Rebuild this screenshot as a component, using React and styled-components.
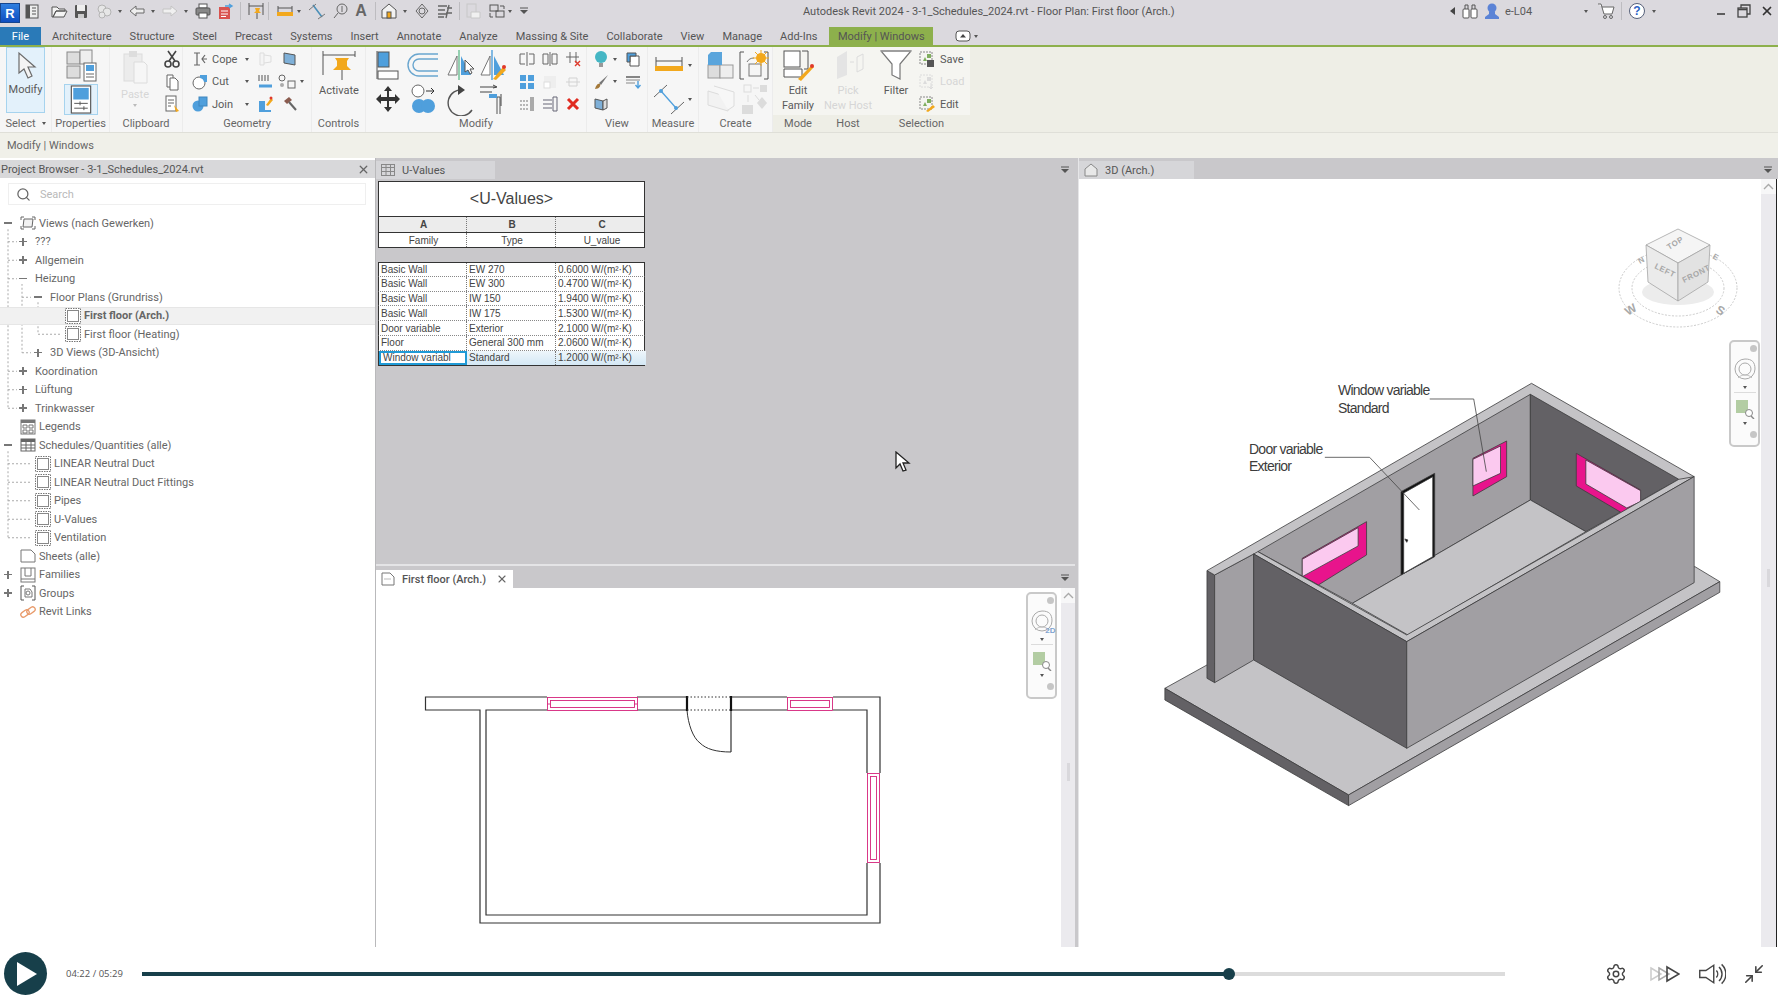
import React from 'react';
import styled, { createGlobalStyle } from 'styled-components';
import { Search, Settings, Minimize2, X } from 'lucide-react';

const GlobalStyle = createGlobalStyle`
  html, body {
    margin: 0;
    padding: 0;
    background: #fff;
    overflow: hidden;
  }
  * { box-sizing: border-box; }
`;

const UI_FONT = 'Roboto, "Liberation Sans", sans-serif';
const G = '#6b6b6b';
const L = '#b4b4b4';
const OFF = '#dcdcdc';
const B = '#4f9fdc';
const Y = '#f2a81d';
const R = '#e0392b';
const GR = '#7fae5e';

const ICONS = {
  doc: [18, 16, <><rect x="3" y="2" width="12" height="13" fill="#eee" stroke="#555" /><rect x="3" y="2" width="4" height="13" fill="#555" /><path d="M9 5h4M9 8h4M9 11h4" stroke="#555" /></>],
  open: [18, 16, <path d="M2 4h5l2 2h6v2H6l-3 6H2zM3 14l3-6h11l-3 6z" fill="#f4f4f4" stroke="#555" />],
  save: [18, 16, <><rect x="3" y="2" width="12" height="13" rx="1" fill="#555" /><rect x="5" y="2" width="8" height="6" fill="#eee" /><rect x="6" y="11" width="6" height="4" fill="#ccc" /></>],
  sync: [18, 16, <><circle cx="7" cy="6" r="4" stroke={L} fill="#e6e6e6" /><circle cx="12" cy="9" r="4" stroke={L} fill="#e6e6e6" /><circle cx="7" cy="12" r="3" stroke={L} fill="#e6e6e6" /></>],
  undo: [18, 16, <path d="M2 8l6-5v3h8v4H8v3z" fill="#eee" stroke={G} />],
  redo: [18, 16, <path d="M16 8l-6-5v3H2v4h8v3z" fill="#f0f0f0" stroke="#c4c4c4" />],
  print: [18, 16, <><rect x="5" y="1" width="8" height="4" fill="#fff" stroke="#555" /><rect x="2" y="5" width="14" height="7" rx="1" fill="#888" stroke="#555" /><rect x="5" y="10" width="8" height="5" fill="#fff" stroke="#555" /></>],
  sheetout: [18, 16, <><rect x="3" y="4" width="11" height="12" fill="#d9534f" /><path d="M5 8h7M5 11h7M5 13.5h5" stroke="#fff" /><path d="M9 3h7M13 1l3 2-3 2" stroke={B} strokeWidth="1.4" /></>],
  dimPin: [18, 18, <><path d="M2 1v12M16 1v12M2 4h14" stroke="#555" /><path d="M8 6h5l-1 3 2 2H7l2-2z" fill={Y} /><path d="M10 11v6" stroke="#555" /></>],
  ruler: [18, 14, <><path d="M2 2v6M16 2v6M2 4h14" stroke="#555" /><rect x="1" y="8" width="16" height="4" fill={Y} /></>],
  tagLine: [18, 18, <><path d="M5 3L14 15" stroke="#4a8fb8" strokeWidth="1.6" /><path d="M1 8l7-6M10 17l7-5" stroke="#777" /></>],
  tag: [18, 16, <><circle cx="11" cy="6" r="5" stroke="#666" /><path d="M3 15l4-5" stroke="#666" /><path d="M11 3v6" stroke="#666" /></>],
  home: [18, 16, <><path d="M9 1L2 7v8h14V7z" fill="#f2f2f2" stroke="#555" /><rect x="7" y="9" width="4" height="6" fill={Y} stroke="#555" /></>],
  target: [18, 16, <><path d="M9 1l6 7-6 7-6-7z" stroke="#666" /><circle cx="9" cy="8" r="3" stroke="#666" /></>],
  bars: [18, 16, <path d="M2 3h9M2 7h7M2 11h9M2 14h6M13 2l-3 13M11 5h5M10 10h6" stroke="#666" strokeWidth="1.4" />],
  excel: [18, 16, <><rect x="3" y="1" width="9" height="13" stroke="#c8c8c8" /><path d="M7 9h9v6H7z" fill="#f0f0f0" stroke="#c8c8c8" /></>],
  swap: [18, 16, <><rect x="2" y="2" width="8" height="6" stroke="#555" /><rect x="8" y="8" width="8" height="6" stroke="#555" /><path d="M12 3h4v3M2 10v4h3" stroke="#555" /></>],
  menuCaret: [10, 10, <><path d="M1 2h8" stroke="#555" /><path d="M1 4h8L5 8z" fill="#555" /></>],
  binoc: [18, 16, <><rect x="2" y="6" width="6" height="9" rx="1" fill="#fff" stroke="#555" /><rect x="10" y="6" width="6" height="9" rx="1" fill="#fff" stroke="#555" /><path d="M4 6V2h3v4M11 6V2h3v4" stroke="#555" /></>],
  user: [18, 18, <><circle cx="9" cy="6" r="4.5" fill="#5b83d6" /><path d="M6 10h6v2l4 3v2H2v-2l4-3z" fill="#5b83d6" /></>],
  cart: [18, 16, <><path d="M1 1h3l3 10h8l2-7H5" fill="#fff" stroke="#666" /><circle cx="8" cy="14" r="1.5" stroke="#666" /><circle cx="14" cy="14" r="1.5" stroke="#666" /></>],
  help: [18, 18, <><circle cx="9" cy="9" r="7.5" fill="#fff" stroke="#56617a" /><text x="9" y="13" textAnchor="middle" fontSize="12" fontWeight="700" fontFamily="Liberation Sans" fill="#2c63c5" stroke="none">?</text></>],
  restore: [14, 14, <><rect x="1" y="4" width="9" height="9" fill="#dbd9de" stroke="#444" strokeWidth="1.3" /><path d="M4 4V1h9v9h-3" stroke="#444" strokeWidth="1.3" /><path d="M1 5.5h9" stroke="#444" strokeWidth="1.6" /></>],
  ribbonToggle: [16, 12, <><rect x="1" y="1" width="14" height="10" rx="3" fill="#fff" stroke="#555" /><path d="M5 7.5h6L8 4z" fill="#444" /></>],

  modify: [28, 30, <path d="M7 2v20l5-4 4 9 4-2-4-9h7z" fill="#f4f4f4" stroke={G} strokeWidth="1.2" />],
  propStack: [32, 34, <><rect x="2" y="3" width="13" height="12" fill="#ddd" stroke="#888" /><rect x="15" y="1" width="12" height="14" fill="#eee" stroke="#888" /><rect x="2" y="17" width="13" height="12" fill="#ddd" stroke="#888" /><rect x="19" y="14" width="12" height="18" fill="#fff" stroke="#666" /><rect x="21" y="16" width="8" height="6" fill={B} /><path d="M21 25h8M21 28h8" stroke="#666" /></>],
  propPanel: [24, 30, <><rect x="2" y="1" width="20" height="28" fill="#fff" stroke="#555" strokeWidth="1.2" /><rect x="4" y="3" width="16" height="12" fill={B} /><path d="M5 19h14M5 24h14M11 17v4M15 22v4" stroke="#555" /></>],
  paste: [28, 36, <><rect x="3" y="5" width="18" height="27" fill="#ececec" stroke={OFF} /><rect x="8" y="2" width="8" height="6" fill="#ddd" /><path d="M13 13h10l3 3v18H13z" fill="#f6f6f6" stroke={OFF} /></>],
  scissors: [16, 18, <><circle cx="4" cy="14" r="3" stroke="#444" strokeWidth="1.6" /><circle cx="12" cy="14" r="3" stroke="#444" strokeWidth="1.6" /><path d="M5 11L12 1M11 11L4 1" stroke="#444" strokeWidth="1.6" /></>],
  copy: [16, 18, <><path d="M3 2h6v12H3z" fill="#fff" stroke="#666" /><path d="M6 5h5l3 3v9H6z" fill="#fff" stroke="#666" /></>],
  matchProps: [16, 18, <><rect x="2" y="1" width="10" height="15" fill="#fff" stroke="#666" /><path d="M4 5h6M4 8h6M4 11h3" stroke="#666" /><path d="M10 10l5 6-3 1z" fill={Y} /></>],
  cope: [16, 16, <path d="M2 2h6M2 14h6M5 2v12M10 8h5M13 4l-3 4 3 4" stroke="#666" strokeWidth="1.2" />],
  cut: [16, 16, <><circle cx="7" cy="9" r="6" fill="#fff" stroke="#666" /><path d="M8 1h7v7h-3a5 5 0 0 0-4-4z" fill={B} /></>],
  join: [16, 16, <><circle cx="6" cy="10" r="5.5" fill={B} /><rect x="7" y="1" width="8" height="9" fill={B} stroke="#3f86bd" /></>],
  geoA: [14, 16, <><path d="M2 2h4v12H2z" stroke="#ddd" fill="#f4f4f4" /><path d="M6 4l7 1v6l-7 1" stroke="#ddd" /></>],
  geoB: [14, 16, <path d="M1 2l11 2v10l-11-2z" fill="#7fb0d8" stroke="#555" />],
  geoC: [16, 16, <><path d="M2 1v6M5 1v6M8 1v6M11 1v6" stroke="#555" /><path d="M2 12h13" stroke={B} strokeWidth="3" /></>],
  geoD: [20, 16, <><circle cx="5" cy="4" r="3" stroke="#666" /><circle cx="5" cy="11" r="2" fill="#aaa" /><rect x="11" y="7" width="7" height="7" stroke="#666" /></>],
  geoE: [16, 16, <><path d="M2 5h6v9h6v2H2z" fill={B} /><path d="M9 9l5-7 2 2-5 6z" fill={Y} /><circle cx="14" cy="2" r="1.5" fill={R} /></>],
  hammer: [16, 16, <><path d="M2 5l5-4 3 3-5 4z" fill="#8a5b4e" /><path d="M7 6l7 8" stroke="#666" strokeWidth="2" /></>],
  activate: [36, 32, <><path d="M2 2v24M34 2v6M2 6h32" stroke="#555" /><path d="M14 9h14l-2 3v5l4 4H12l4-4v-5z" fill={Y} /><path d="M21 21v10" stroke="#555" /></>],
  align: [26, 30, <><path d="M2 1v28" stroke="#555" /><rect x="3" y="2" width="11" height="15" fill={B} stroke="#555" /><rect x="3" y="21" width="20" height="8" fill="#fff" stroke="#555" /></>],
  offset: [32, 26, <path d="M31 2H12A11 11 0 0 0 12 24H31M31 7H12a6 6 0 0 0 0 12h19" stroke="#6aa6cf" strokeWidth="1.4" />],
  mirrorA: [26, 32, <><path d="M11 7L2 26h9z" fill="#fff" stroke="#777" /><path d="M13 1v30" stroke="#6bbf93" strokeWidth="1.4" /><path d="M15 7l10 19H15z" fill={B} /></>],
  mirrorB: [28, 32, <><path d="M11 7L2 26h9z" fill="#fff" stroke="#777" /><path d="M13 1v30" stroke={B} strokeWidth="1.4" /><path d="M15 7l10 19H15z" fill={B} /><path d="M14 30l10-12 3 3-10 10z" fill={Y} /><circle cx="25" cy="18" r="2" fill={R} /></>],
  move: [26, 28, <path d="M13 1l4 5h-3v6h6V9l5 5-5 5v-3h-6v6h3l-4 5-4-5h3v-6H6v3l-5-5 5-5v3h6V6H9z" fill="#333" />],
  copyShape: [26, 30, <><circle cx="8" cy="7" r="6" fill="#fff" stroke="#666" /><path d="M16 7h8M21 4l3 3-3 3" stroke="#333" /><circle cx="9" cy="22" r="7" fill={B} /><circle cx="18" cy="22" r="7" fill={B} /></>],
  rotate: [30, 34, <><path d="M19 8a13 13 0 1 0 9 20" stroke="#555" strokeWidth="1.4" /><path d="M14 3l7 5-7 5z" fill="#444" /></>],
  trim: [28, 30, <><path d="M1 3h16M1 8h12M14 4l4-1-4-2" stroke="#444" /><path d="M14 13h7v17M18 13v17" stroke="#555" /><path d="M10 10h8v4h-8z" fill={B} /><path d="M22 10v12" stroke="#444" /></>],
  smA: [16, 14, <path d="M1 2h5M1 12h5M1 2v10M8 0v14M15 2h-5M15 12h-5M15 2v10" stroke="#666" />],
  smB: [16, 14, <path d="M1 2h5M1 12h5M1 2v10M6 2v10M8 0v14M15 2h-5M15 12h-5M15 2v10M10 2v10" stroke="#666" />],
  smC: [16, 16, <><path d="M1 6h13M5 1v11M11 1v11" stroke="#666" /><path d="M10 10l5 5M15 10l-5 5" stroke={R} strokeWidth="1.4" /></>],
  smD: [16, 16, <><rect x="1" y="1" width="6" height="6" fill={B} /><rect x="9" y="1" width="6" height="6" fill={B} /><rect x="1" y="9" width="6" height="6" fill={B} /><rect x="9" y="9" width="6" height="6" fill={B} /></>],
  smE: [16, 16, <><rect x="2" y="2" width="12" height="12" fill="#eee" /><rect x="2" y="8" width="6" height="6" fill="#fff" stroke="#ddd" /></>],
  smF: [16, 14, <path d="M1 7h14M4 3h8v8H4z" stroke="#d2d2d2" />],
  smG: [16, 16, <><path d="M1 5h8M1 9h8M1 13h8" stroke="#777" strokeDasharray="2 1" /><path d="M11 1v14h4V1z" fill="#aaa" /></>],
  smH: [16, 16, <><path d="M1 4h9M1 8h9M1 12h9" stroke="#667" strokeWidth="1.2" /><path d="M11 1h4v14h-4z" stroke="#667" /></>],
  redX: [14, 14, <path d="M2 2l10 10M12 2L2 12" stroke="#e02b20" strokeWidth="3" />],
  bulb: [16, 18, <><circle cx="8" cy="7" r="6" fill="#45b6c4" /><rect x="6" y="13" width="4" height="4" fill="#999" /></>],
  brush: [16, 16, <><path d="M15 1L6 9l2 2z" fill="#777" /><path d="M2 15c1-4 3-6 5-5 1 2-1 5-5 5z" fill="#a4793a" /></>],
  box3d: [16, 16, <><path d="M2 3l8 2v9l-8-2z" fill="#7fb0d8" stroke="#555" /><path d="M10 5l4-2v9l-4 2z" fill="#ddd" stroke="#555" /></>],
  cube: [16, 16, <><path d="M5 5h9v10H5z" fill="#fff" stroke="#555" /><path d="M2 2h9v3H5v6H2z" fill={B} stroke="#555" /></>],
  linesDown: [16, 16, <><path d="M1 3h14" stroke="#555" strokeWidth="1.4" /><path d="M1 6h14M1 9h9" stroke="#888" /><path d="M13 7v6M10.5 11l2.5 3 2.5-3" stroke={B} strokeWidth="1.4" /></>],
  dimAligned: [30, 20, <><path d="M2 2v9M28 2v9M2 6h26" stroke="#555" /><rect x="1" y="11" width="28" height="5" fill={Y} /></>],
  measureLine: [32, 32, <><path d="M1 14L14 2M18 31l13-12" stroke="#666" /><path d="M8 8l15 17" stroke={B} strokeWidth="1.3" /><circle cx="8" cy="8" r="2" fill={B} /><circle cx="23" cy="25" r="2" fill={B} /></>],
  massing: [30, 30, <><rect x="2" y="15" width="12" height="13" fill="#ddd" stroke="#999" /><rect x="14" y="15" width="13" height="13" fill="#eee" stroke="#999" /><path d="M5 2h11v13H2V5z" fill="#5aa5dc" /></>],
  createPart: [30, 30, <><path d="M5 2H1v27h4M25 2h4v27h-4" stroke="#555" /><path d="M8 12a8 8 0 0 1 7-4" stroke="#777" /><rect x="10" y="14" width="12" height="12" fill="#f5f5f5" stroke="#777" /><circle cx="22" cy="8" r="5" fill={Y} /><path d="M22 0v16M14 8h16M16 2l12 12M28 2L16 14" stroke={Y} /></>],
  createOffA: [30, 32, <><path d="M2 8l20 6v14L2 22z" fill="#f2f2f2" stroke={OFF} /><path d="M8 3l20 6v14l-6 4" fill="#f7f7f7" stroke={OFF} /></>],
  createOffB: [28, 32, <><rect x="4" y="2" width="7" height="7" stroke={OFF} /><path d="M13 5h6" stroke={OFF} /><rect x="20" y="2" width="7" height="7" fill={OFF} /><rect x="2" y="22" width="11" height="9" fill={OFF} /><path d="M22 14l5 6-5 6-5-6z" fill={OFF} /><path d="M8 12v7M15 12l4 5" stroke={OFF} /></>],
  editFamily: [32, 32, <><rect x="2" y="2" width="16" height="16" fill="#fff" stroke="#555" /><path d="M20 2h6v18h-4" stroke="#555" /><path d="M2 20h18v8H2z" fill="#fff" stroke="#555" /><path d="M16 30l14-14 2 2-13 14z" fill={Y} /><circle cx="30" cy="17" r="2" fill={R} /></>],
  pickHost: [32, 32, <><path d="M5 8l10-6v24l-10 4z" fill="#e4e4e4" /><path d="M18 13h4M25 8l6-3v15l-6 3z" stroke={OFF} /></>],
  filter: [32, 32, <><path d="M1 2h30L20 15v15l-8-4V15z" fill="#fff" stroke="#777" strokeWidth="1.2" /><path d="M1 2h30" stroke="#999" strokeWidth="1.6" /></>],
  selSave: [16, 16, <><rect x="1" y="1" width="12" height="12" stroke="#888" strokeDasharray="2 1" /><path d="M4 10l2-4 2 4z" fill={GR} /><rect x="8" y="3" width="4" height="4" fill={GR} /><rect x="8" y="9" width="7" height="7" fill="#555" /></>],
  selLoad: [16, 16, <><rect x="1" y="1" width="12" height="12" stroke={OFF} strokeDasharray="2 1" /><path d="M4 10l2-4 2 4z" fill={OFF} /><rect x="8" y="3" width="4" height="4" fill={OFF} /><path d="M12 9v6M10 13l2 2 2-2" stroke={OFF} /></>],
  selEdit: [16, 16, <><rect x="1" y="1" width="12" height="12" stroke="#888" strokeDasharray="2 1" /><path d="M4 10l2-4 2 4z" fill={GR} /><rect x="8" y="3" width="4" height="4" fill={GR} /><path d="M7 15l7-6 2 2-7 5z" fill={Y} /></>],
  pointer: [12, 16, <path d="M1 1v12l3-2 2 4 2-1-2-4h4z" fill="#fff" stroke="#555" />],

  treeView: [16, 16, <><path d="M1 5V2h3M12 2h3v3M1 11v3h3M12 14h3v-3" stroke="#666" /><path d="M4 4h9l-1 8H3z" fill="#f2f2f2" stroke="#666" /></>],
  treeLeaf: [16, 16, <><rect x="0.5" y="0.5" width="15" height="15" stroke="#777" strokeDasharray="1.5 1" /><rect x="2.5" y="2.5" width="11" height="11" fill="#fff" stroke="#888" /></>],
  treeLegend: [16, 16, <><rect x="1" y="1" width="14" height="14" stroke="#777" /><rect x="1" y="1" width="14" height="3" fill="#777" /><path d="M3 6h4v3H3zM9 6h4v3H9zM3 11h4v3H3zM9 11h4v3H9z" stroke="#777" /></>],
  treeTable: [16, 14, <><rect x="1" y="1" width="14" height="12" stroke="#666" /><rect x="1" y="1" width="14" height="3" fill="#666" /><path d="M1 7h14M1 10h14M6 4v9M11 4v9" stroke="#666" /></>],
  treeSheet: [16, 14, <path d="M1 1h10l4 4v8H1z" stroke="#777" fill="#fff" />],
  treeFamily: [16, 16, <><rect x="1" y="1" width="14" height="14" stroke="#777" /><path d="M5 1v8h6V1M1 12h14" stroke="#777" /></>],
  treeGroup: [16, 16, <><path d="M4 1H1v14h3M12 1h3v14h-3" stroke="#555" /><path d="M5 4h5l2 3v5H5z" stroke="#777" /><circle cx="8" cy="8" r="2" stroke="#777" /></>],
  treeLink: [16, 14, <><rect x="0.5" y="6" width="9" height="5" rx="2.5" transform="rotate(-35 5 8.5)" stroke="#e89a6a" strokeWidth="1.3" /><rect x="6.5" y="3" width="9" height="5" rx="2.5" transform="rotate(-35 11 5.5)" stroke="#e89a6a" strokeWidth="1.3" /></>],

  tabTable: [14, 12, <><rect x="0.5" y="0.5" width="13" height="11" stroke="#888" /><path d="M0.5 3.5h13M0.5 7.5h13M5 0.5v11M9.5 0.5v11" stroke="#888" /></>],
  tabPlan: [14, 14, <><path d="M1 1h8l4 4v8H1z" fill="#fff" stroke="#777" /><path d="M3 7h7" stroke="#bbb" /></>],
  tabHome: [14, 14, <path d="M7 1L1 6v7h12V6z" fill="#e8e8e8" stroke="#888" />],
  wheel: [24, 26, <><path d="M12 2c7 0 10 3 10 10a10 10 0 1 1-10-10z" stroke="#aaa" /><circle cx="12" cy="12" r="6" stroke="#aaa" /><path d="M5 21c3-4 11-4 14 0" stroke="#c4c4c4" /></>],
  zoomPage: [20, 20, <><rect x="1" y="1" width="12" height="13" fill="#b3cda3" /><circle cx="14" cy="14" r="3.5" fill="#fff" stroke="#888" /><path d="M16 17l3 3" stroke="#888" strokeWidth="1.4" /></>],
};

const Icon = ({ n }) => {
  const [w, h, body] = ICONS[n];
  return (
    <svg width={w} height={h} viewBox={`0 0 ${w} ${h}`} fill="none">
      {body}
    </svg>
  );
};

const Page = styled.div`
  width: 1778px;
  height: 1000px;
  display: flex;
  flex-direction: column;
  font-family: ${UI_FONT};
  font-size: 11px;
  color: #5a5a5a;
  background: #fff;
  overflow: hidden;
`;

/* title bar */
const TitleBar = styled.div`
  height: 27px;
  display: flex;
  align-items: center;
  background: #dbd9de;
  padding-bottom: 5px;
`;

const Qat = styled.div`
  width: 803px;
  display: flex;
  align-items: center;
  flex-shrink: 0;
`;

const Logo = styled.div`
  width: 20px;
  height: 20px;
  margin-top: 4px;
  background: linear-gradient(#2f7fe0, #0f4fc0);
  border: 1px solid #16468f;
  color: #fff;
  font: 700 13px "Liberation Sans", sans-serif;
  display: flex;
  align-items: center;
  justify-content: center;
`;

const Slot = styled.div`
  width: ${(p) => p.$w || 18}px;
  margin-left: ${(p) => p.$ml}px;
  display: flex;
  align-items: center;
  justify-content: center;
  flex-shrink: 0;
`;

const Caret = styled.span`
  display: inline-block;
  width: 0;
  height: 0;
  border-left: 2.5px solid transparent;
  border-right: 2.5px solid transparent;
  border-top: 3px solid ${(p) => p.$off ? '#bbb' : '#555'};
`;

const QatSep = styled.div`
  width: 1px;
  height: 18px;
  background: #bdbcc0;
  margin-left: ${(p) => p.$ml}px;
`;

const BigA = styled.span`
  font: 700 16px "Liberation Sans", sans-serif;
  color: #666;
`;

const DocTitle = styled.div`
  color: #555;
  white-space: nowrap;
`;

const TitleRight = styled.div`
  margin-left: auto;
  display: flex;
  align-items: center;
  padding-right: 4px;
`;

const UserName = styled.span`
  width: 28px;
  margin-left: 4px;
  white-space: nowrap;
`;

/* tabs */
const TabStrip = styled.div`
  height: 20px;
  display: flex;
  align-items: stretch;
  background: #dbd9de;
  border-bottom: 2px solid #8db04c;
`;

const FileTab = styled.div`
  width: 41px;
  margin-right: 2px;
  background: #2a7ab8;
  color: #fff;
  display: flex;
  align-items: center;
  justify-content: center;
`;

const RibbonTab = styled.div`
  padding: 0 ${(p) => p.$active ? '8.5px' : '9px'};
  margin: ${(p) => p.$active ? '0 0 0 3px' : 0};
  display: flex;
  align-items: center;
  white-space: nowrap;
  color: #555;
  background: ${(p) => p.$active ? '#8db04c' : 'transparent'};
`;

const ToggleBox = styled.div`
  margin-left: 22px;
  display: flex;
  align-items: center;
  gap: 3px;
`;

/* ribbon */
const Ribbon = styled.div`
  height: 86px;
  display: flex;
  background: #eeeee6;
  border-bottom: 1px solid #dfdfd8;
`;

const Panel = styled.div`
  width: ${(p) => p.$w}px;
  flex-shrink: 0;
  display: flex;
  flex-direction: column;
  background: ${(p) => p.$ctx ? '#eeeee6' : '#f6f6f6'};
  border-right: ${(p) => p.$ctx ? 0 : '1px solid #ececec'};
`;

const PanelBody = styled.div`
  height: 68px;
  display: flex;
  align-items: stretch;
  padding-left: ${(p) => p.$pl || 0}px;
  background: ${(p) => p.$ctx ? '#f5f5f1' : 'transparent'};
`;

const PanelLabel = styled.div`
  flex: 1;
  display: flex;
  align-items: center;
  justify-content: center;
  gap: 6px;
  color: #666;
  white-space: nowrap;
`;

const BigTool = styled.div`
  width: ${(p) => p.$w}px;
  flex-shrink: 0;
  margin-top: ${(p) => p.$mt ?? 2}px;
  display: flex;
  flex-direction: column;
  align-items: center;
  gap: ${(p) => p.$gap ?? 2}px;
  line-height: 15px;
  text-align: center;
  white-space: nowrap;
  color: ${(p) => p.$off ? '#d6d6d6' : '#5a5a5a'};
`;

const Pressed = styled.div`
  width: ${(p) => p.$w}px;
  height: ${(p) => p.$h}px;
  flex-shrink: 0;
  display: flex;
  flex-direction: column;
  align-items: center;
  padding-top: ${(p) => p.$pt ?? 3}px;
  gap: 2px;
  background: #e3f1fb;
  border: 1px solid #a6d3ee;
`;

const PropsColumn = styled.div`
  width: 100%;
  display: flex;
  flex-direction: column;
  align-items: center;
  padding-top: 2px;
  gap: 1px;
`;

const ToolCol = styled.div`
  width: ${(p) => p.$w}px;
  flex-shrink: 0;
  margin-left: ${(p) => p.$ml || 0}px;
  display: grid;
  grid-auto-rows: 22.5px;
  padding-top: 1px;
  justify-items: ${(p) => p.$left ? 'start' : 'center'};
  align-items: center;
`;

const SmallTool = styled.div`
  display: flex;
  align-items: center;
  gap: ${(p) => p.$gap ?? 4}px;
  color: ${(p) => p.$off ? '#d6d6d6' : '#5a5a5a'};
`;

const SmallText = styled.span`
  width: ${(p) => p.$w}px;
`;

const BigGrid = styled.div`
  display: grid;
  grid-template-columns: ${(p) => p.$cols};
  grid-template-rows: 36px 32px;
  justify-items: center;
  align-items: center;
  margin-right: ${(p) => p.$mr || 0}px;
`;

const MirrorArea = styled.div`
  position: relative;
  display: flex;
`;

const PointerMark = styled.div`
  position: absolute;
  left: 93px;
  top: 12px;
`;

const Options = styled.div`
  height: 25px;
  display: flex;
  align-items: center;
  padding-left: 7px;
  background: #f0f0e9;
  color: #666;
`;

/* work area */
const Work = styled.div`
  height: 789px;
  display: flex;
  background: #c9c8cb;
`;

const Browser = styled.div`
  width: 376px;
  flex-shrink: 0;
  display: flex;
  flex-direction: column;
  background: #fff;
  border-right: 1px solid #b9b9bb;
`;

const BrowserHead = styled.div`
  height: 18px;
  margin-top: 2px;
  display: flex;
  align-items: center;
  justify-content: space-between;
  padding: 0 5px 0 1px;
  background: #d8d8da;
  color: #555;
`;

const SearchBox = styled.div`
  margin: 5px 9px 0 8px;
  height: 22px;
  display: flex;
  align-items: center;
  gap: 9px;
  padding-left: 7px;
  border: 1px solid #efefef;
  color: #b9b9b9;
`;

const Tree = styled.div`
  position: relative;
  margin-top: 9px;
`;

const TreeLines = styled.svg`
  position: absolute;
  left: 0;
  top: 0;
  pointer-events: none;
`;

const TreeRow = styled.div`
  position: relative;
  height: 18.5px;
  display: flex;
  align-items: center;
  padding-left: ${(p) => p.$pad}px;
  color: #666;
  font-weight: ${(p) => p.$bold ? 700 : 400};
  background: ${(p) => p.$on ? '#f1f1f1' : 'transparent'};
  border-top: 1px solid ${(p) => p.$on ? '#e6e6e6' : 'transparent'};
  border-bottom: 1px solid ${(p) => p.$on ? '#e6e6e6' : 'transparent'};
`;

const Toggle = styled.span`
  position: relative;
  width: 10px;
  height: 10px;
  margin-right: 7px;
  flex-shrink: 0;
  background: #fff;
  &::before {
    content: '';
    position: absolute;
    left: 1px;
    right: 1px;
    top: 4px;
    height: 1.6px;
    background: #777;
  }
  &::after {
    content: '';
    display: ${(p) => p.$open ? 'none' : 'block'};
    position: absolute;
    top: 1px;
    bottom: 1px;
    left: 4.2px;
    width: 1.6px;
    background: #777;
  }
`;

const RowIcon = styled.span`
  width: 16px;
  height: 16px;
  margin-right: 3px;
  flex-shrink: 0;
  display: flex;
  align-items: center;
  justify-content: center;
  background: #fff;
`;

const Middle = styled.div`
  width: 699px;
  flex-shrink: 0;
  display: flex;
  flex-direction: column;
`;

const Right = styled.div`
  flex: 1;
  margin-left: 3px;
  display: flex;
  flex-direction: column;
  background: #fff;
  border-left: 1px solid #e6e6e8;
`;

const ViewTabs = styled.div`
  height: ${(p) => p.$h || 21}px;
  flex-shrink: 0;
  display: flex;
  align-items: flex-end;
  justify-content: space-between;
  background: #c9c8cb;
  padding-right: 5px;
`;

const ViewTab = styled.div`
  width: ${(p) => p.$w}px;
  height: 18px;
  display: flex;
  align-items: center;
  gap: 7px;
  padding-left: 5px;
  color: #555;
  font-weight: ${(p) => p.$bold ? 500 : 400};
  background: ${(p) => p.$white ? '#fff' : '#d6d6d9'};
`;

const TabClose = styled.span`
  margin-left: 3px;
  display: flex;
`;

const TabMenu = styled.div`
  align-self: center;
  display: flex;
  padding-top: 2px;
`;

const SheetPane = styled.div`
  position: relative;
  height: 387px;
  padding: 2px 0 0 2px;
  background: #c9c8cb;
  border-bottom: 2px solid #e4e4e6;
`;

const Sheet = styled.div`
  width: 267px;
  font: 10px "Liberation Sans", sans-serif;
  color: #444;
`;

const SheetTitle = styled.div`
  height: 36px;
  display: flex;
  align-items: center;
  justify-content: center;
  background: #fff;
  border: 1.5px solid #333;
  font-size: 16px;
`;

const SheetRow = styled.div`
  display: grid;
  grid-template-columns: 88px 89px 90px;
  height: ${(p) => p.$h}px;
  background: ${(p) => p.$grey ? '#ececec' : '#fff'};
  border-left: 1.5px solid #333;
  border-right: 1.5px solid #333;
  border-bottom: ${(p) => p.$bottom ? '1.5px solid #333' : '1px dotted #888'};
  border-top: ${(p) => p.$top ? '1.5px solid #333' : 0};
`;

const SheetCell = styled.div`
  display: flex;
  align-items: center;
  padding-left: 2px;
  justify-content: ${(p) => p.$center ? 'center' : 'flex-start'};
  font-weight: ${(p) => p.$bold ? 700 : 400};
  border-right: ${(p) => p.$last ? 0 : '1px dotted #777'};
  overflow: hidden;
  white-space: nowrap;
  background: ${(p) => p.$sel ? 'linear-gradient(#eef6fb, #d4e8f5)' : 'transparent'};
  border: ${(p) => p.$edit ? '2px solid #1f9ad6' : undefined};
`;

const SheetGap = styled.div`
  height: 14px;
`;

const Cursor = styled.svg`
  position: absolute;
  left: 519px;
  top: 272px;
`;

const PlanPane = styled.div`
  position: relative;
  flex: 1;
  background: #fff;
  display: flex;
`;

const Canvas = styled.svg`
  display: block;
  flex-shrink: 0;
`;

const Scrollbar = styled.div`
  width: ${(p) => p.$w}px;
  flex-shrink: 0;
  display: flex;
  flex-direction: column;
  align-items: center;
  background: #ebeaee;
  border-right: ${(p) => p.$edge ? '1px solid #222' : 0};
`;

const ScrollUp = styled.div`
  width: 100%;
  height: 15px;
  display: flex;
  align-items: center;
  justify-content: center;
  background: #f7f7f8;
`;

const ScrollThumb = styled.div`
  width: 3px;
  height: 18px;
  margin-top: ${(p) => p.$mt}px;
  background: #d9d8dc;
`;

const NavBar = styled.div`
  position: absolute;
  right: ${(p) => p.$right}px;
  top: ${(p) => p.$top}px;
  width: 31px;
  height: 107px;
  display: flex;
  flex-direction: column;
  align-items: center;
  padding-top: 3px;
  background: #fbfbfb;
  border: 2px solid #c9c9c9;
  border-radius: 5px;
`;

const NavDot = styled.span`
  align-self: flex-end;
  margin: ${(p) => p.$mt || 0}px 1px 0 0;
  width: 7px;
  height: 7px;
  border-radius: 50%;
  background: #c6c6c6;
`;

const NavWheel = styled.div`
  position: relative;
  margin-top: 5px;
  display: flex;
`;

const Badge2D = styled.span`
  position: absolute;
  right: -2px;
  bottom: 0;
  font: 700 8px "Liberation Sans", sans-serif;
  color: #7fa3d0;
`;

const NavLine = styled.div`
  width: 22px;
  height: 1px;
  margin: 3px 0 6px;
  background: #dcdcdc;
`;

const NavCaret = styled.div`
  margin: 3px 0 0;
  display: flex;
`;

/* player */
const Player = styled.div`
  height: 53px;
  display: flex;
  align-items: center;
  background: #fff;
`;

const PlayButton = styled.div`
  width: 43px;
  height: 43px;
  margin-left: 4px;
  flex-shrink: 0;
  border-radius: 50%;
  background: #173f4a;
  display: flex;
  align-items: center;
  justify-content: center;
  padding-left: 3px;
`;

const Time = styled.div`
  width: 76px;
  margin-left: 19px;
  font: 9.5px "Open Sans", sans-serif;
  color: #555;
`;

const Track = styled.div`
  position: relative;
  width: 1363px;
  height: 4px;
  background: #dcdcdc;
`;

const Progress = styled.div`
  height: 100%;
  background: #173f4a;
`;

const Knob = styled.div`
  position: absolute;
  top: -4px;
  width: 12px;
  height: 12px;
  margin-left: -6px;
  border-radius: 50%;
  background: #173f4a;
`;

const Controls = styled.div`
  display: flex;
  align-items: center;
  margin-left: 100px;
  color: #444;
`;

const ControlSlot = styled.div`
  margin-left: ${(p) => p.$ml}px;
  display: flex;
`;

const Wall3D = styled.g`
  polygon {
    vector-effect: non-scaling-stroke;
    stroke: #3c3c3e;
    stroke-width: 0.8;
    stroke-linejoin: round;
  }
  polyline {
    vector-effect: non-scaling-stroke;
    fill: none;
    stroke: #444;
    stroke-width: 0.8;
  }
`;

const Note = styled.text`
  font: 14px "Liberation Sans", sans-serif;
  letter-spacing: -0.75px;
  fill: #3c3c3c;
`;

const CubeText = styled.text`
  font: 700 8px "Liberation Sans", sans-serif;
  fill: #a8a8a8;
  letter-spacing: 0.5px;
`;

const QAT = [
  ['doc', 3], ['open', 9], ['save', 4], ['sync', 5], ['^', 4], ['undo', 5], ['^', 4], ['redo', 5], ['^', 4],
  ['print', 5], ['sheetout', 4], ['|', 6], ['dimPin', 6], ['|', 3], ['ruler', 7], ['^', 2], ['tagLine', 6],
  ['tag', 5], ['A', 3], ['|', 5], ['home', 4], ['^', 4], ['target', 5], ['bars', 5], ['|', 5], ['excel', 4],
  ['swap', 6], ['^', 1], ['menuCaret', 2],
];

const TABS = ['Architecture', 'Structure', 'Steel', 'Precast', 'Systems', 'Insert', 'Annotate', 'Analyze',
  'Massing & Site', 'Collaborate', 'View', 'Manage', 'Add-Ins'];

const TREE = [
  { pad: 3, t: 'open', i: 'treeView', label: 'Views (nach Gewerken)' },
  { pad: 18, t: 'closed', label: '???' },
  { pad: 18, t: 'closed', label: 'Allgemein' },
  { pad: 18, t: 'open', label: 'Heizung' },
  { pad: 33, t: 'open', label: 'Floor Plans (Grundriss)' },
  { pad: 65, i: 'treeLeaf', label: 'First floor (Arch.)', on: true },
  { pad: 65, i: 'treeLeaf', label: 'First floor (Heating)' },
  { pad: 33, t: 'closed', label: '3D Views (3D-Ansicht)' },
  { pad: 18, t: 'closed', label: 'Koordination' },
  { pad: 18, t: 'closed', label: 'Lüftung' },
  { pad: 18, t: 'closed', label: 'Trinkwasser' },
  { pad: 20, i: 'treeLegend', label: 'Legends' },
  { pad: 3, t: 'open', i: 'treeTable', label: 'Schedules/Quantities (alle)' },
  { pad: 35, i: 'treeLeaf', label: 'LINEAR Neutral Duct' },
  { pad: 35, i: 'treeLeaf', label: 'LINEAR Neutral Duct Fittings' },
  { pad: 35, i: 'treeLeaf', label: 'Pipes' },
  { pad: 35, i: 'treeLeaf', label: 'U-Values' },
  { pad: 35, i: 'treeLeaf', label: 'Ventilation' },
  { pad: 20, i: 'treeSheet', label: 'Sheets (alle)' },
  { pad: 3, t: 'closed', i: 'treeFamily', label: 'Families' },
  { pad: 3, t: 'closed', i: 'treeGroup', label: 'Groups' },
  { pad: 20, i: 'treeLink', label: 'Revit Links' },
];

const SCHEDULE = [
  ['Basic Wall', 'EW 270', '0.6000 W/(m²·K)'],
  ['Basic Wall', 'EW 300', '0.4700 W/(m²·K)'],
  ['Basic Wall', 'IW 150', '1.9400 W/(m²·K)'],
  ['Basic Wall', 'IW 175', '1.5300 W/(m²·K)'],
  ['Door variable', 'Exterior', '2.1000 W/(m²·K)'],
  ['Floor', 'General 300 mm', '2.0600 W/(m²·K)'],
];

const rowY = (i) => 9.25 + i * 18.5;

function TreeConnectors() {
  const stub = (x1, i, x2) => <path key={`${x1}-${i}`} d={`M${x1} ${rowY(i)}H${x2}`} />;
  return (
    <TreeLines width="376" height="420" fill="none" stroke="#aaa" strokeDasharray="2 2">
      <path d={`M8 ${rowY(0) + 6}V${rowY(10)}`} />
      <path d={`M22 ${rowY(3) + 5}V${rowY(7)}`} />
      <path d={`M38 ${rowY(4) + 5}V${rowY(6)}`} />
      <path d={`M8 ${rowY(12) + 6}V${rowY(17)}`} />
      {[1, 2, 3, 8, 9, 10].map((i) => stub(8, i, 17))}
      {[4, 7].map((i) => stub(22, i, 31))}
      {[5, 6].map((i) => stub(38, i, 62))}
      {[13, 14, 15, 16, 17].map((i) => stub(8, i, 32))}
    </TreeLines>
  );
}

function NavTools({ right, top, badge }) {
  return (
    <NavBar $right={right} $top={top}>
      <NavDot />
      <NavWheel>
        <Icon n="wheel" />
        {badge && <Badge2D>2D</Badge2D>}
      </NavWheel>
      <NavCaret><Caret /></NavCaret>
      <NavLine />
      <Icon n="zoomPage" />
      <NavCaret><Caret /></NavCaret>
      <NavDot $mt={6} />
    </NavBar>
  );
}

const Chevron = () => (
  <svg width="11" height="7" viewBox="0 0 11 7" fill="none" stroke="#aaa" strokeWidth="1.4"><path d="M1 6l4.5-4.5L10 6" /></svg>
);

function PlanDrawing() {
  const pink = '#d6247c';
  return (
    <Canvas width="685" height="359" viewBox="376 588 685 359" fill="none">
      <g stroke="#333" strokeWidth="1.2">
        <path d="M547 697H425.5V710H480V923H880V863M880 773V697H833M787 697H731M687 697H637M547 710H486V915H867V863M867 773V710H833M787 710H731V752M687 710H637" />
        <path d="M687 710c1 14 6 28 13 33 6 6 16 9 31 9" strokeWidth="1" />
        <path d="M687 696V711M731 696V711" strokeWidth="2.2" stroke="#111" />
        <path d="M687 697H731M687 710H731" strokeDasharray="1.5 2" strokeWidth="1.2" />
      </g>
      <g stroke={pink} strokeWidth="0.9">
        <rect x="547.5" y="697.5" width="90" height="13" />
        <rect x="550.5" y="700.5" width="84" height="7" />
        <path d="M547.5 704H550M634 704H637" />
        <rect x="787.5" y="697.5" width="45" height="13" />
        <rect x="790.5" y="700.5" width="39" height="7" />
        <rect x="867.5" y="773.5" width="12" height="89" />
        <rect x="870.5" y="776.5" width="6" height="83" />
      </g>
    </Canvas>
  );
}

function ModelDrawing() {
  const dark = '#636165';
  const mid = '#a19fa3';
  const lite = '#c4c3c6';
  const hot = '#e8148c';
  const glass = '#fbc9ef';
  return (
    <Canvas width="682" height="768" viewBox="1079 179 682 768" fill="none">
      <Wall3D transform="translate(1140 360) scale(.3827 .3333)">
        <polygon points="65,985 175,915 1450,620 1515,665 545,1305" fill={lite} />
        <polygon points="65,985 545,1305 545,1337 65,1020" fill={dark} />
        <polygon points="545,1305 1515,665 1515,697 545,1337" fill={mid} />
        <polygon points="175,632 195,645 195,968 175,955" fill={dark} />
        <polygon points="195,645 297,582 297,900 195,968" fill={mid} />
        <polygon points="175,632 1023,70 1448,350 697,845 297,582 195,645" fill={lite} />
        <polygon points="308,575 1020,103 1020,420 555,730" fill={mid} />
        <polygon points="1020,103 1408,358 1165,515 1020,420" fill={dark} />
        <polygon points="555,730 1020,420 1165,515 700,825" fill={lite} />
        <polygon points="424,595 592,485 592,585 466,675 424,648" fill={hot} stroke="none" />
        <polygon points="424,598 570,503 570,558 424,650" fill={glass} stroke="none" />
        <polygon points="870,295 958,243 958,350 870,408" fill={hot} stroke="none" />
        <polygon points="870,298 942,258 942,340 870,378" fill={glass} stroke="none" />
        <polygon points="1140,280 1308,390 1308,425 1258,458 1140,378" fill={hot} stroke="none" />
        <polygon points="1165,300 1308,392 1308,425 1272,444 1165,372" fill={glass} stroke="none" />
        <polygon points="682,395 770,340 770,590 682,645" fill="#111" stroke="none" />
        <polygon points="689,399 765,350 765,590 689,640" fill="#fff" stroke="none" />
        <polygon points="692,537 700,540 697,547" fill="#111" stroke="none" />
        <polygon points="297,582 308,575 697,825 1408,358 1448,350 697,845" fill={lite} />
        <polygon points="297,582 697,845 697,1165 297,900" fill={dark} />
        <polygon points="697,845 1448,350 1448,668 697,1165" fill={mid} />
        <polyline points="757,117 872,117 905,335" />
        <polyline points="483,292 600,292 730,450" />
      </Wall3D>
      <Note x="1338" y="395">Window variable</Note>
      <Note x="1338" y="413">Standard</Note>
      <Note x="1249" y="454">Door variable</Note>
      <Note x="1249" y="471">Exterior</Note>
      <g stroke="#ccc" strokeDasharray="2 1.5">
        <ellipse cx="1678" cy="288" rx="59" ry="39" />
        <ellipse cx="1678" cy="288" rx="46" ry="28" />
      </g>
      <ellipse cx="1678" cy="292" rx="36" ry="13" fill="#ececec" />
      <g stroke="#a5a5a5" strokeWidth="0.8">
        <polygon points="1678,229 1710,245 1678,263 1646,245" fill="#f5f5f5" />
        <polygon points="1646,245 1678,263 1678,301 1648,282" fill="#ebebeb" />
        <polygon points="1678,263 1710,245 1708,282 1678,301" fill="#e2e2e2" />
      </g>
      <CubeText transform="translate(1669 250) rotate(-32)">TOP</CubeText>
      <CubeText transform="translate(1654 268) rotate(26)">LEFT</CubeText>
      <CubeText transform="translate(1684 283) rotate(-27)">FRONT</CubeText>
      <CubeText transform="translate(1628 316) rotate(-32) scale(1.5)">W</CubeText>
      <CubeText transform="translate(1715 312) rotate(30) scale(1.5)">S</CubeText>
      <CubeText transform="translate(1640 264) rotate(-30)">N</CubeText>
      <CubeText transform="translate(1712 258) rotate(30)">E</CubeText>
    </Canvas>
  );
}

export default function App() {
  const played = (1087 / 1363) * 100;
  return (
    <Page>
      <GlobalStyle />
      <TitleBar>
        <Qat>
          <Logo>R</Logo>
          {QAT.map(([n, ml], i) => {
            if (n === '^') return <Slot key={i} $w={6} $ml={ml}><Caret /></Slot>;
            if (n === '|') return <QatSep key={i} $ml={ml} />;
            if (n === 'A') return <Slot key={i} $ml={ml}><BigA>A</BigA></Slot>;
            return <Slot key={i} $ml={ml}><Icon n={n} /></Slot>;
          })}
        </Qat>
        <DocTitle>Autodesk Revit 2024 - 3-1_Schedules_2024.rvt - Floor Plan: First floor (Arch.)</DocTitle>
        <TitleRight>
          <svg width="5" height="8" viewBox="0 0 5 8"><path d="M5 0v8L0 4z" fill="#444" /></svg>
          <Slot $ml={6}><Icon n="binoc" /></Slot>
          <Slot $ml={4}><Icon n="user" /></Slot>
          <UserName>e-L04</UserName>
          <Slot $w={6} $ml={50}><Caret /></Slot>
          <Slot $ml={8}><Icon n="cart" /></Slot>
          <QatSep $ml={6} />
          <Slot $ml={6}><Icon n="help" /></Slot>
          <Slot $w={6} $ml={5}><Caret /></Slot>
          <Slot $w={12} $ml={58}><svg width="10" height="10"><path d="M1 8h8" stroke="#333" strokeWidth="1.5" /></svg></Slot>
          <Slot $w={14} $ml={10}><Icon n="restore" /></Slot>
          <Slot $w={14} $ml={9}><X size={16} color="#333" strokeWidth={3} /></Slot>
        </TitleRight>
      </TitleBar>

      <TabStrip>
        <FileTab>File</FileTab>
        {TABS.map((t) => <RibbonTab key={t}>{t}</RibbonTab>)}
        <RibbonTab $active>Modify | Windows</RibbonTab>
        <ToggleBox><Icon n="ribbonToggle" /><Caret /></ToggleBox>
      </TabStrip>

      <Ribbon>
        <Panel $w={52}>
          <PanelBody $pl={6}>
            <Pressed $w={39} $h={66}>
              <Icon n="modify" />
              Modify
            </Pressed>
          </PanelBody>
          <PanelLabel>Select <Caret /></PanelLabel>
        </Panel>
        <Panel $w={58}>
          <PanelBody>
            <PropsColumn>
              <Icon n="propStack" />
              <Pressed $w={34} $h={31} $pt={0}><Icon n="propPanel" /></Pressed>
            </PropsColumn>
          </PanelBody>
          <PanelLabel>Properties</PanelLabel>
        </Panel>
        <Panel $w={73}>
          <PanelBody $pl={9}>
            <BigTool $w={32} $off>
              <Icon n="paste" />
              Paste
              <Caret $off />
            </BigTool>
            <ToolCol $w={28} $ml={7}>
              <Icon n="scissors" />
              <Icon n="copy" />
              <Icon n="matchProps" />
            </ToolCol>
          </PanelBody>
          <PanelLabel>Clipboard</PanelLabel>
        </Panel>
        <Panel $w={129}>
          <PanelBody $pl={9}>
            <ToolCol $w={64} $left>
              <SmallTool><Icon n="cope" /><SmallText $w={29}>Cope</SmallText><Caret /></SmallTool>
              <SmallTool><Icon n="cut" /><SmallText $w={29}>Cut</SmallText><Caret /></SmallTool>
              <SmallTool><Icon n="join" /><SmallText $w={29}>Join</SmallText><Caret /></SmallTool>
            </ToolCol>
            <ToolCol $w={17}>
              <Icon n="geoA" />
              <Icon n="geoC" />
              <Icon n="geoE" />
            </ToolCol>
            <ToolCol $w={34}>
              <Icon n="geoB" />
              <SmallTool $gap={3}><Icon n="geoD" /><Caret /></SmallTool>
              <Icon n="hammer" />
            </ToolCol>
          </PanelBody>
          <PanelLabel>Geometry</PanelLabel>
        </Panel>
        <Panel $w={54}>
          <PanelBody>
            <BigTool $w={54} $gap={2}>
              <Icon n="activate" />
              Activate
            </BigTool>
          </PanelBody>
          <PanelLabel>Controls</PanelLabel>
        </Panel>
        <Panel $w={221}>
          <PanelBody $pl={5}>
            <MirrorArea>
              <BigGrid $cols="34px 36px 35px 33px" $mr={6}>
                <Icon n="align" /><Icon n="offset" /><Icon n="mirrorA" /><Icon n="mirrorB" />
                <Icon n="move" /><Icon n="copyShape" /><Icon n="rotate" /><Icon n="trim" />
              </BigGrid>
              <PointerMark><Icon n="pointer" /></PointerMark>
            </MirrorArea>
            <ToolCol $w={23}><Icon n="smA" /><Icon n="smD" /><Icon n="smG" /></ToolCol>
            <ToolCol $w={23}><Icon n="smB" /><Icon n="smE" /><Icon n="smH" /></ToolCol>
            <ToolCol $w={24}><Icon n="smC" /><Icon n="smF" /><Icon n="redX" /></ToolCol>
          </PanelBody>
          <PanelLabel>Modify</PanelLabel>
        </Panel>
        <Panel $w={61}>
          <PanelBody $pl={6}>
            <ToolCol $w={28} $left>
              <SmallTool><Icon n="bulb" /><Caret /></SmallTool>
              <SmallTool><Icon n="brush" /><Caret /></SmallTool>
              <Icon n="box3d" />
            </ToolCol>
            <ToolCol $w={24}>
              <Icon n="cube" />
              <Icon n="linesDown" />
            </ToolCol>
          </PanelBody>
          <PanelLabel>View</PanelLabel>
        </Panel>
        <Panel $w={51}>
          <PanelBody $pl={4}>
            <BigGrid $cols="34px 8px">
              <Icon n="dimAligned" /><Caret />
              <Icon n="measureLine" /><Caret />
            </BigGrid>
          </PanelBody>
          <PanelLabel>Measure</PanelLabel>
        </Panel>
        <Panel $w={74}>
          <PanelBody $pl={5}>
            <BigGrid $cols="33px 33px">
              <Icon n="massing" /><Icon n="createPart" />
              <Icon n="createOffA" /><Icon n="createOffB" />
            </BigGrid>
          </PanelBody>
          <PanelLabel>Create</PanelLabel>
        </Panel>
        <Panel $w={50} $ctx>
          <PanelBody $ctx>
            <BigTool $w={50} $gap={2}>
              <Icon n="editFamily" />
              <span>Edit<br />Family</span>
            </BigTool>
          </PanelBody>
          <PanelLabel>Mode</PanelLabel>
        </Panel>
        <Panel $w={50} $ctx>
          <PanelBody $ctx>
            <BigTool $w={50} $gap={2} $off>
              <Icon n="pickHost" />
              <span>Pick<br />New Host</span>
            </BigTool>
          </PanelBody>
          <PanelLabel>Host</PanelLabel>
        </Panel>
        <Panel $w={97} $ctx>
          <PanelBody $ctx>
            <BigTool $w={46} $gap={2}>
              <Icon n="filter" />
              Filter
            </BigTool>
            <ToolCol $w={50} $left>
              <SmallTool $gap={5}><Icon n="selSave" />Save</SmallTool>
              <SmallTool $gap={5} $off><Icon n="selLoad" />Load</SmallTool>
              <SmallTool $gap={5}><Icon n="selEdit" />Edit</SmallTool>
            </ToolCol>
          </PanelBody>
          <PanelLabel>Selection</PanelLabel>
        </Panel>
      </Ribbon>

      <Options>Modify | Windows</Options>

      <Work>
        <Browser>
          <BrowserHead>
            Project Browser - 3-1_Schedules_2024.rvt
            <X size={13} color="#666" strokeWidth={2.4} />
          </BrowserHead>
          <SearchBox>
            <Search size={15} color="#666" />
            Search
          </SearchBox>
          <Tree>
            <TreeConnectors />
            {TREE.map((row) => (
              <TreeRow key={row.label} $pad={row.pad} $on={row.on} $bold={row.on}>
                {row.t && <Toggle $open={row.t === 'open'} />}
                {row.i && <RowIcon><Icon n={row.i} /></RowIcon>}
                {row.label}
              </TreeRow>
            ))}
          </Tree>
        </Browser>

        <Middle>
          <ViewTabs>
            <ViewTab $w={119}><Icon n="tabTable" />U-Values</ViewTab>
            <TabMenu><Icon n="menuCaret" /></TabMenu>
          </ViewTabs>
          <SheetPane>
            <Sheet>
              <SheetTitle>&lt;U-Values&gt;</SheetTitle>
              <SheetRow $h={16} $grey $bottom>
                <SheetCell $center $bold>A</SheetCell>
                <SheetCell $center $bold>B</SheetCell>
                <SheetCell $center $bold $last>C</SheetCell>
              </SheetRow>
              <SheetRow $h={15} $bottom>
                <SheetCell $center>Family</SheetCell>
                <SheetCell $center>Type</SheetCell>
                <SheetCell $center $last>U_value</SheetCell>
              </SheetRow>
              <SheetGap />
              {SCHEDULE.map((r, i) => (
                <SheetRow key={r[0] + r[1]} $h={14.8} $top={i === 0}>
                  <SheetCell>{r[0]}</SheetCell>
                  <SheetCell>{r[1]}</SheetCell>
                  <SheetCell $last>{r[2]}</SheetCell>
                </SheetRow>
              ))}
              <SheetRow $h={15} $bottom>
                <SheetCell $edit>Window variabl</SheetCell>
                <SheetCell $sel>Standard</SheetCell>
                <SheetCell $sel $last>1.2000 W/(m²·K)</SheetCell>
              </SheetRow>
            </Sheet>
            <Cursor width="16" height="21" viewBox="0 0 16 21">
              <path d="M1 1v16l4-4 3 7 3-1-3-7h6z" fill="#fff" stroke="#222" strokeWidth="1.3" />
            </Cursor>
          </SheetPane>
          <ViewTabs $h={22}>
            <ViewTab $w={137} $white $bold><Icon n="tabPlan" />First floor (Arch.)<TabClose><X size={12} color="#666" strokeWidth={2.2} /></TabClose></ViewTab>
            <TabMenu><Icon n="menuCaret" /></TabMenu>
          </ViewTabs>
          <PlanPane>
            <PlanDrawing />
            <Scrollbar $w={14}>
              <ScrollUp><Chevron /></ScrollUp>
              <ScrollThumb $mt={160} />
            </Scrollbar>
            <NavTools right={18} top={4} badge />
          </PlanPane>
        </Middle>

        <Right>
          <ViewTabs>
            <ViewTab $w={115}><Icon n="tabHome" />3D (Arch.)</ViewTab>
            <TabMenu><Icon n="menuCaret" /></TabMenu>
          </ViewTabs>
          <PlanPane>
            <ModelDrawing />
            <Scrollbar $w={16} $edge>
              <ScrollUp><Chevron /></ScrollUp>
              <ScrollThumb $mt={375} />
            </Scrollbar>
            <NavTools right={18} top={161} />
          </PlanPane>
        </Right>
      </Work>

      <Player>
        <PlayButton>
          <svg width="20" height="24" viewBox="0 0 20 24"><path d="M0 0l20 12L0 24z" fill="#fff" /></svg>
        </PlayButton>
        <Time>04:22 / 05:29</Time>
        <Track>
          <Progress style={{ width: `${played}%` }} />
          <Knob style={{ left: `${played}%` }} />
        </Track>
        <Controls>
          <ControlSlot $ml={0}><Settings size={22} strokeWidth={1.6} /></ControlSlot>
          <ControlSlot $ml={23}>
            <svg width="30" height="18" viewBox="0 0 30 18" fill="none">
              <path d="M1 3l10 6-10 6z" stroke="#ccc" strokeWidth="1.5" />
              <path d="M9 3l10 6-10 6z" stroke="#aaa" strokeWidth="1.5" />
              <path d="M17 2l12 7-12 7z" stroke="#444" strokeWidth="1.6" />
            </svg>
          </ControlSlot>
          <ControlSlot $ml={18}>
            <svg width="28" height="24" viewBox="0 0 32 26" fill="none" stroke="#444" strokeWidth="1.6">
              <path d="M2 9h7l9-6v20l-9-6H2z" />
              <path d="M21 9a6 6 0 0 1 0 8M24 5a11 11 0 0 1 0 16M27 2a15 15 0 0 1 0 22" />
            </svg>
          </ControlSlot>
          <ControlSlot $ml={17}><Minimize2 size={22} strokeWidth={1.7} /></ControlSlot>
        </Controls>
      </Player>
    </Page>
  );
}
